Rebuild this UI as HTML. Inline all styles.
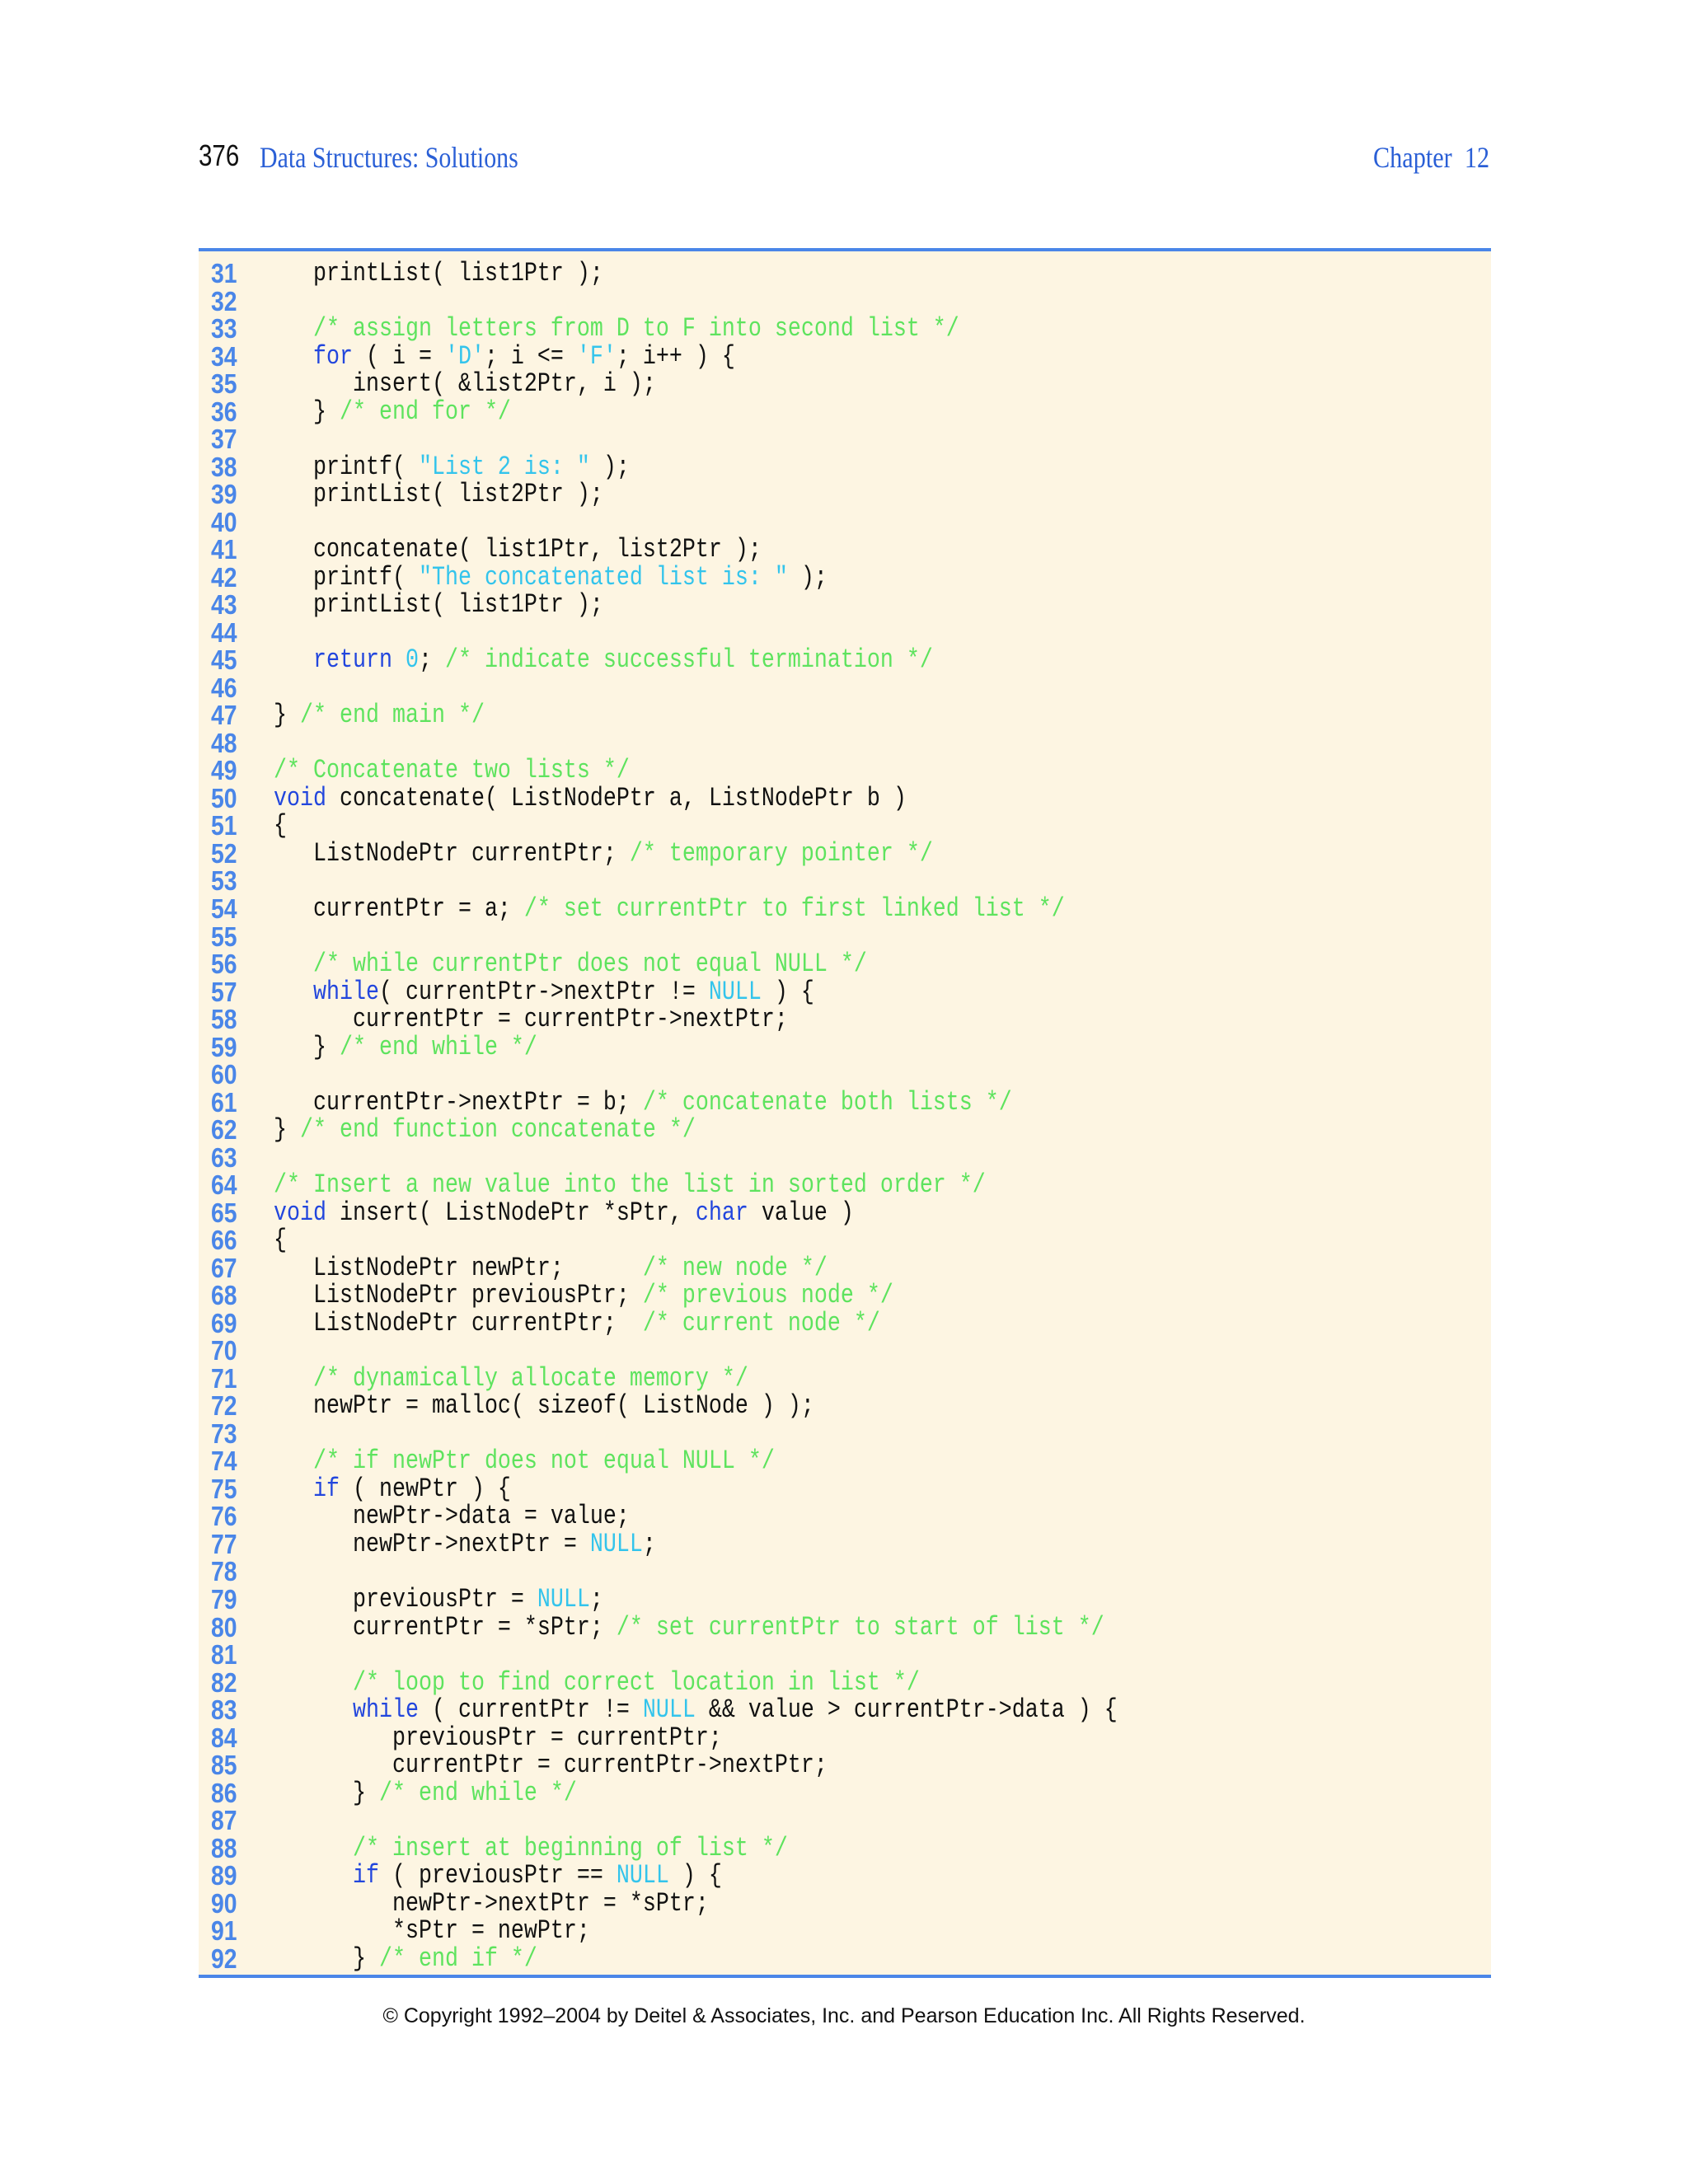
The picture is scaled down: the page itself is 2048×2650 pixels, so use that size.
<!DOCTYPE html>
<html><head><meta charset="utf-8"><style>
html,body{margin:0;padding:0;background:#fff;}
body{width:2048px;height:2650px;position:relative;overflow:hidden;}
.hdr{position:absolute;top:170px;font-family:"Liberation Serif",serif;font-size:36px;color:#2a5fd6;white-space:nowrap;}
.pg{position:absolute;left:241px;top:168px;font-family:"Liberation Sans",sans-serif;font-size:36px;color:#111;transform:scaleX(0.82);transform-origin:left;}
.rule{position:absolute;left:241px;width:1568px;height:4px;background:#4a86e8;}
.bg{position:absolute;left:241px;width:1568px;top:305px;height:2091px;background:#fdf5e2;}
.ln{position:absolute;left:256px;font-family:"Liberation Sans",sans-serif;font-weight:bold;font-size:33px;color:#4a86e8;transform:scaleX(0.86);transform-origin:left;height:33.52px;line-height:33.52px;}
.cd{position:absolute;left:332px;font-family:"Liberation Mono",monospace;font-size:32px;color:#111;white-space:pre;transform:scaleX(0.833);transform-origin:left;height:33.52px;line-height:33.52px;}
.k{color:#2246dd}.s{color:#33c4ec}.c{color:#5ee35e}
.foot{position:absolute;top:2432px;left:0;width:2048px;text-align:center;font-family:"Liberation Sans",sans-serif;font-size:25px;color:#111;}
</style></head><body>
<div class="pg">376</div>
<div class="hdr" style="left:315px;transform:scaleX(0.83);transform-origin:left;">Data Structures: Solutions</div>
<div class="hdr" style="left:1666px;transform:scaleX(0.84);transform-origin:left;">Chapter&nbsp; 12</div>
<div class="bg"></div>
<div class="rule" style="top:301px"></div>
<div class="rule" style="top:2396px"></div>
<div style="position:absolute;top:0;left:0">
<div class="ln" style="top:315px">31</div><div class="cd" style="top:315px">   printList( list1Ptr );</div>
<div class="ln" style="top:348.5px">32</div>
<div class="ln" style="top:382px">33</div><div class="cd" style="top:382px">   <span class="c">/* assign letters from D to F into second list */</span></div>
<div class="ln" style="top:415.6px">34</div><div class="cd" style="top:415.6px">   <span class="k">for</span> ( i = <span class="s">'D'</span>; i &lt;= <span class="s">'F'</span>; i++ ) {</div>
<div class="ln" style="top:449.1px">35</div><div class="cd" style="top:449.1px">      insert( &amp;list2Ptr, i );</div>
<div class="ln" style="top:482.6px">36</div><div class="cd" style="top:482.6px">   } <span class="c">/* end for */</span></div>
<div class="ln" style="top:516.1px">37</div>
<div class="ln" style="top:549.6px">38</div><div class="cd" style="top:549.6px">   printf( <span class="s">"List 2 is: "</span> );</div>
<div class="ln" style="top:583.2px">39</div><div class="cd" style="top:583.2px">   printList( list2Ptr );</div>
<div class="ln" style="top:616.7px">40</div>
<div class="ln" style="top:650.2px">41</div><div class="cd" style="top:650.2px">   concatenate( list1Ptr, list2Ptr );</div>
<div class="ln" style="top:683.7px">42</div><div class="cd" style="top:683.7px">   printf( <span class="s">"The concatenated list is: "</span> );</div>
<div class="ln" style="top:717.2px">43</div><div class="cd" style="top:717.2px">   printList( list1Ptr );</div>
<div class="ln" style="top:750.8px">44</div>
<div class="ln" style="top:784.3px">45</div><div class="cd" style="top:784.3px">   <span class="k">return</span> <span class="s">0</span>; <span class="c">/* indicate successful termination */</span></div>
<div class="ln" style="top:817.8px">46</div>
<div class="ln" style="top:851.3px">47</div><div class="cd" style="top:851.3px">} <span class="c">/* end main */</span></div>
<div class="ln" style="top:884.8px">48</div>
<div class="ln" style="top:918.4px">49</div><div class="cd" style="top:918.4px"><span class="c">/* Concatenate two lists */</span></div>
<div class="ln" style="top:951.9px">50</div><div class="cd" style="top:951.9px"><span class="k">void</span> concatenate( ListNodePtr a, ListNodePtr b )</div>
<div class="ln" style="top:985.4px">51</div><div class="cd" style="top:985.4px">{</div>
<div class="ln" style="top:1018.9px">52</div><div class="cd" style="top:1018.9px">   ListNodePtr currentPtr; <span class="c">/* temporary pointer */</span></div>
<div class="ln" style="top:1052.4px">53</div>
<div class="ln" style="top:1086px">54</div><div class="cd" style="top:1086px">   currentPtr = a; <span class="c">/* set currentPtr to first linked list */</span></div>
<div class="ln" style="top:1119.5px">55</div>
<div class="ln" style="top:1153px">56</div><div class="cd" style="top:1153px">   <span class="c">/* while currentPtr does not equal NULL */</span></div>
<div class="ln" style="top:1186.5px">57</div><div class="cd" style="top:1186.5px">   <span class="k">while</span>( currentPtr-&gt;nextPtr != <span class="s">NULL</span> ) {</div>
<div class="ln" style="top:1220px">58</div><div class="cd" style="top:1220px">      currentPtr = currentPtr-&gt;nextPtr;</div>
<div class="ln" style="top:1253.6px">59</div><div class="cd" style="top:1253.6px">   } <span class="c">/* end while */</span></div>
<div class="ln" style="top:1287.1px">60</div>
<div class="ln" style="top:1320.6px">61</div><div class="cd" style="top:1320.6px">   currentPtr-&gt;nextPtr = b; <span class="c">/* concatenate both lists */</span></div>
<div class="ln" style="top:1354.1px">62</div><div class="cd" style="top:1354.1px">} <span class="c">/* end function concatenate */</span></div>
<div class="ln" style="top:1387.6px">63</div>
<div class="ln" style="top:1421.2px">64</div><div class="cd" style="top:1421.2px"><span class="c">/* Insert a new value into the list in sorted order */</span></div>
<div class="ln" style="top:1454.7px">65</div><div class="cd" style="top:1454.7px"><span class="k">void</span> insert( ListNodePtr *sPtr, <span class="k">char</span> value )</div>
<div class="ln" style="top:1488.2px">66</div><div class="cd" style="top:1488.2px">{</div>
<div class="ln" style="top:1521.7px">67</div><div class="cd" style="top:1521.7px">   ListNodePtr newPtr;      <span class="c">/* new node */</span></div>
<div class="ln" style="top:1555.2px">68</div><div class="cd" style="top:1555.2px">   ListNodePtr previousPtr; <span class="c">/* previous node */</span></div>
<div class="ln" style="top:1588.8px">69</div><div class="cd" style="top:1588.8px">   ListNodePtr currentPtr;  <span class="c">/* current node */</span></div>
<div class="ln" style="top:1622.3px">70</div>
<div class="ln" style="top:1655.8px">71</div><div class="cd" style="top:1655.8px">   <span class="c">/* dynamically allocate memory */</span></div>
<div class="ln" style="top:1689.3px">72</div><div class="cd" style="top:1689.3px">   newPtr = malloc( sizeof( ListNode ) );</div>
<div class="ln" style="top:1722.8px">73</div>
<div class="ln" style="top:1756.4px">74</div><div class="cd" style="top:1756.4px">   <span class="c">/* if newPtr does not equal NULL */</span></div>
<div class="ln" style="top:1789.9px">75</div><div class="cd" style="top:1789.9px">   <span class="k">if</span> ( newPtr ) {</div>
<div class="ln" style="top:1823.4px">76</div><div class="cd" style="top:1823.4px">      newPtr-&gt;data = value;</div>
<div class="ln" style="top:1856.9px">77</div><div class="cd" style="top:1856.9px">      newPtr-&gt;nextPtr = <span class="s">NULL</span>;</div>
<div class="ln" style="top:1890.4px">78</div>
<div class="ln" style="top:1924px">79</div><div class="cd" style="top:1924px">      previousPtr = <span class="s">NULL</span>;</div>
<div class="ln" style="top:1957.5px">80</div><div class="cd" style="top:1957.5px">      currentPtr = *sPtr; <span class="c">/* set currentPtr to start of list */</span></div>
<div class="ln" style="top:1991px">81</div>
<div class="ln" style="top:2024.5px">82</div><div class="cd" style="top:2024.5px">      <span class="c">/* loop to find correct location in list */</span></div>
<div class="ln" style="top:2058px">83</div><div class="cd" style="top:2058px">      <span class="k">while</span> ( currentPtr != <span class="s">NULL</span> &amp;&amp; value &gt; currentPtr-&gt;data ) {</div>
<div class="ln" style="top:2091.6px">84</div><div class="cd" style="top:2091.6px">         previousPtr = currentPtr;</div>
<div class="ln" style="top:2125.1px">85</div><div class="cd" style="top:2125.1px">         currentPtr = currentPtr-&gt;nextPtr;</div>
<div class="ln" style="top:2158.6px">86</div><div class="cd" style="top:2158.6px">      } <span class="c">/* end while */</span></div>
<div class="ln" style="top:2192.1px">87</div>
<div class="ln" style="top:2225.6px">88</div><div class="cd" style="top:2225.6px">      <span class="c">/* insert at beginning of list */</span></div>
<div class="ln" style="top:2259.2px">89</div><div class="cd" style="top:2259.2px">      <span class="k">if</span> ( previousPtr == <span class="s">NULL</span> ) {</div>
<div class="ln" style="top:2292.7px">90</div><div class="cd" style="top:2292.7px">         newPtr-&gt;nextPtr = *sPtr;</div>
<div class="ln" style="top:2326.2px">91</div><div class="cd" style="top:2326.2px">         *sPtr = newPtr;</div>
<div class="ln" style="top:2359.7px">92</div><div class="cd" style="top:2359.7px">      } <span class="c">/* end if */</span></div>
</div>
<div class="foot">© Copyright 1992–2004 by Deitel &amp; Associates, Inc. and Pearson Education Inc. All Rights Reserved.</div>
</body></html>
